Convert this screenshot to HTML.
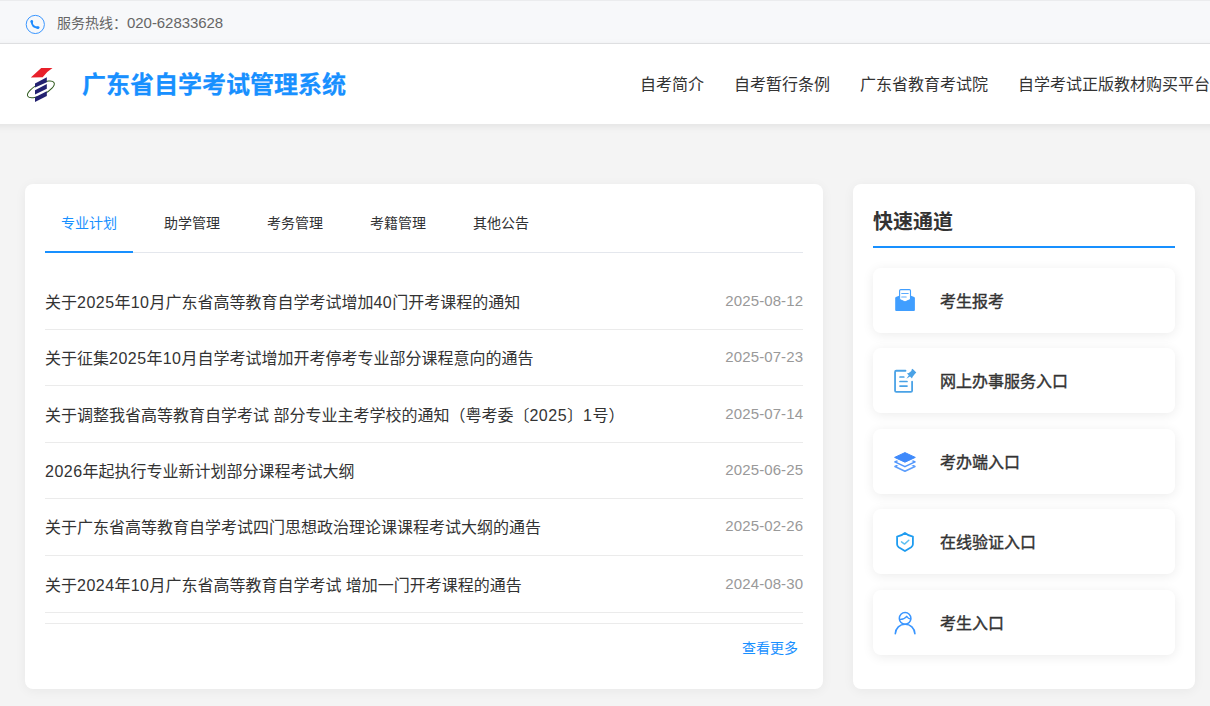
<!DOCTYPE html>
<html lang="zh-CN">
<head>
<meta charset="utf-8">
<title>广东省自学考试管理系统</title>
<style>
*{box-sizing:border-box;margin:0;padding:0}
html,body{width:1210px;height:706px;overflow:hidden}
body{background:#f4f4f4;font-family:"Liberation Sans","Noto Sans CJK SC",sans-serif;color:#333;position:relative}
.abs{position:absolute}
.topbar{position:absolute;left:0;top:0;width:1210px;height:44px;background:#f7f8fa;border-bottom:1px solid #e3e4e6;border-top:1px solid #ebecee}
.hot{position:absolute;left:57px;top:12px;font-size:14px;line-height:20px;color:#666;white-space:nowrap}
.hot span{font-size:15px;letter-spacing:-.05px}
.phone{position:absolute;left:25px;top:13px;width:21px;height:21px}
.hshadow{position:absolute;left:-30px;top:44px;width:1270px;height:80px;background:#fff;box-shadow:0 2px 8px rgba(0,0,0,.08)}
.header{position:absolute;left:0;top:44px;width:1210px;height:80px;background:#fff}
.logo{position:absolute;left:20px;top:18px;width:44px;height:44px}
.title{position:absolute;left:82px;top:23px;font-size:24px;line-height:36px;font-weight:bold;color:#1890ff;-webkit-text-stroke:.25px #1890ff;white-space:nowrap}
.nav{position:absolute;top:30px;font-size:16px;line-height:22px;color:#333;white-space:nowrap}
.card{position:absolute;background:#fff;border-radius:8px;box-shadow:0 2px 12px rgba(0,0,0,.05)}
.c1{left:25px;top:184px;width:798px;height:505px}
.c2{left:853px;top:184px;width:342px;height:505px}
.tab{position:absolute;top:28px;font-size:14px;line-height:22px;color:#303133;white-space:nowrap}
.tab.on{color:#1890ff}
.tline{position:absolute;left:20px;top:68px;width:758px;height:1px;background:#e4e7ed}
.tbar{position:absolute;left:20px;top:67px;width:88px;height:2px;background:#1890ff}
.row{position:absolute;left:20px;width:758px;height:56.5px;border-bottom:1px solid #ebebeb}
.row .t{position:absolute;left:0;top:18px;font-size:16px;line-height:24px;color:#333;white-space:nowrap}
.row .d{position:absolute;right:0;top:17px;font-size:15px;line-height:22px;color:#999;white-space:nowrap;letter-spacing:.1px;margin-right:-.1px}
.n{letter-spacing:.5px}
.more{position:absolute;right:25px;top:453px;font-size:14px;line-height:22px;color:#1890ff;white-space:nowrap}
.qt{position:absolute;left:20px;top:24px;font-size:20px;line-height:28px;font-weight:bold;color:#333;white-space:nowrap}
.qline{position:absolute;left:20px;top:61.5px;width:302px;height:2px;background:#1890ff}
.qi{position:absolute;left:20px;width:302px;height:65px;background:#fff;border-radius:8px;box-shadow:0 2px 12px rgba(0,0,0,.08)}
.qi .tx{position:absolute;left:67px;top:22px;font-size:16px;line-height:24px;color:#333;-webkit-text-stroke:.4px #333;white-space:nowrap}
.qi svg{position:absolute}
</style>
</head>
<body>
<div class="topbar">
  <svg class="phone" viewBox="0 0 21 21"><circle cx="10.3" cy="10.450" r="9.100" fill="none" stroke="#3a96ff" stroke-width="1"/><path d="M6.700 7.300Q6.800 13.500 13.100 13.700" fill="none" stroke="#1e8bff" stroke-width="1.900" stroke-linecap="round"/><ellipse cx="6.750" cy="7.600" rx="1.350" ry="1.700" fill="#1e8bff"/><ellipse cx="12.800" cy="13.600" rx="1.700" ry="1.350" fill="#1e8bff"/></svg>
  <div class="hot">服务热线：<span>020-62833628</span></div>
</div>
<div class="hshadow"></div>
<div class="header">
  <svg class="logo" viewBox="20 62 44 44">
    <ellipse cx="40.9" cy="89.4" rx="14.8" ry="5.6" transform="rotate(-27 40.9 89.4)" fill="none" stroke="#2f5a1e" stroke-width="1"/>
    <path d="M41.200 68.100L52.500 68Q47 71.300 42.700 77.300L30.800 77.400z" fill="#e8202a"/>
    <polygon points="35,83.5 46.8,77.3 46.800,82.200 35,87.500" fill="#232270"/>
    <polygon points="35,90.3 46.8,84.1 46.800,88.800 35,94.400" fill="#232270"/>
    <polygon points="35,97.2 46.8,91.3 46.800,96 35,101.900" fill="#232270"/>
  </svg>
  <div class="title">广东省自学考试管理系统</div>
  <div class="nav" style="left:640px">自考简介</div>
  <div class="nav" style="left:734px">自考暂行条例</div>
  <div class="nav" style="left:860px">广东省教育考试院</div>
  <div class="nav" style="left:1018px">自学考试正版教材购买平台</div>
</div>

<div class="card c1">
  <div class="tab on" style="left:36px">专业计划</div>
  <div class="tab" style="left:139px">助学管理</div>
  <div class="tab" style="left:242px">考务管理</div>
  <div class="tab" style="left:345px">考籍管理</div>
  <div class="tab" style="left:448px">其他公告</div>
  <div class="tline"></div><div class="tbar"></div>

  <div class="row" style="top:89px;height:57px"><div class="t">关于<span class="n">2025</span>年<span class="n">10</span>月广东省高等教育自学考试增加<span class="n">40</span>门开考课程的通知</div><div class="d">2025-08-12</div></div>
  <div class="row" style="top:146px;height:56px"><div class="t" style="top:17px">关于征集<span class="n">2025</span>年<span class="n">10</span>月自学考试增加开考停考专业部分课程意向的通告</div><div class="d" style="top:16px">2025-07-23</div></div>
  <div class="row" style="top:202px;height:57px"><div class="t">关于调整我省高等教育自学考试 部分专业主考学校的通知（粤考委〔<span class="n">2025</span>〕<span class="n">1</span>号）</div><div class="d">2025-07-14</div></div>
  <div class="row" style="top:259px;height:56px"><div class="t" style="top:17px"><span class="n">2026</span>年起执行专业新计划部分课程考试大纲</div><div class="d" style="top:16px">2025-06-25</div></div>
  <div class="row" style="top:315px;height:57px"><div class="t" style="top:17px">关于广东省高等教育自学考试四门思想政治理论课课程考试大纲的通告</div><div class="d" style="top:16px">2025-02-26</div></div>
  <div class="row" style="top:372px;height:57px"><div class="t">关于<span class="n">2024</span>年<span class="n">10</span>月广东省高等教育自学考试 增加一门开考课程的通告</div><div class="d">2024-08-30</div></div>
  <div class="row" style="top:429px;height:11px"></div>
  <div class="more">查看更多</div>
</div>

<div class="card c2">
  <div class="qt">快速通道</div>
  <div class="qline"></div>
  <div class="qi" style="top:84px"><svg viewBox="0 0 40 40" style="left:12px;top:12px;width:40px;height:40px"><path d="M14.600 19.500V10.700Q14.600 9.600 15.700 9.600H24.400Q25.500 9.600 25.500 10.700V19.500L20 22z" fill="#fff" stroke="#409eff" stroke-width="1.1"/><path d="M16.700 13.500H23.200M16.700 17H21.200" stroke="#5aabff" stroke-width="1.1" stroke-linecap="round" fill="none"/><path d="M10.200 18.100Q10.200 17.300 10.900 17L14.100 15.700V19.200L19.950 21.700L26 19.200V15.700L29.200 17Q29.900 17.300 29.900 18.100V29.900Q29.900 30.900 28.900 30.900H11.200Q10.200 30.900 10.200 29.900z" fill="#409eff"/></svg><div class="tx">考生报考</div></div>
  <div class="qi" style="top:164px"><svg viewBox="0 0 40 40" style="left:12px;top:12px;width:40px;height:40px"><path d="M20.500 10.750H11.250Q10.050 10.750 10.050 11.950V30.700Q10.050 31.900 11.250 31.900H25.900Q27.100 31.900 27.100 30.700V21.700" fill="none" stroke="#4aa2e6" stroke-width="1.800" stroke-linecap="round"/><path d="M15 17H18.800M15 21.500H22M15 26.100H22" stroke="#4aa2e6" stroke-width="1.700" stroke-linecap="round" fill="none"/><path d="M27.500 8.800L31.300 12.400L29.800 13.900L27.500 17L27 18.400L25 16.400L21.400 18.700L23.800 15.200L21.900 13.400L23.800 13.100L26.600 10.700L26.300 10z" fill="#4aa2e6"/></svg><div class="tx">网上办事服务入口</div></div>
  <div class="qi" style="top:245px"><svg viewBox="0 0 40 40" style="left:12px;top:13px;width:40px;height:40px"><path d="M9.900 24.500L19.950 19.800L30 24.500L19.950 29.200z" fill="#fff" stroke="#5b9dfc" stroke-width="1.500" stroke-linejoin="round"/><path d="M9.900 19.900L19.950 15.200L30 19.900L19.950 24.600z" fill="#fff" stroke="#fff" stroke-width="4" stroke-linejoin="round"/><path d="M9.900 19.900L19.950 15.200L30 19.900L19.950 24.600z" fill="#fff" stroke="#4f95fc" stroke-width="1.600" stroke-linejoin="round"/><path d="M9.600 15.400L19.950 10.600L30.300 15.400L19.950 20.200z" fill="#fff" stroke="#fff" stroke-width="3.400" stroke-linejoin="round"/><path d="M9.600 15.400L19.950 10.600L30.300 15.400L19.950 20.200z" fill="#3f8afb" stroke="#3f8afb" stroke-width="1" stroke-linejoin="round"/></svg><div class="tx">考办端入口</div></div>
  <div class="qi" style="top:325px"><svg viewBox="0 0 40 40" style="left:12px;top:13px;width:40px;height:40px"><path d="M19.950 11C17.700 12.900 15.200 14.100 12.100 14.600V22.200Q12.100 24 13.700 25.200L19.950 29L26.200 25.200Q27.900 24 27.900 22.200V14.600C24.700 14.100 22.200 12.900 19.950 11z" fill="none" stroke="#1e9cf0" stroke-width="1.800" stroke-linejoin="round"/><path d="M16.500 19.900L19.500 22.100L23.800 18.200" fill="none" stroke="#5cc0f2" stroke-width="1.500" stroke-linecap="round" stroke-linejoin="round"/></svg><div class="tx">在线验证入口</div></div>
  <div class="qi" style="top:406px"><svg viewBox="0 0 40 40" style="left:12px;top:13px;width:40px;height:40px"><circle cx="20.100" cy="15.350" r="5.800" fill="none" stroke="#3a96ff" stroke-width="1.500"/><path d="M14.500 16.400C17.500 16.600 19.800 15.600 21.700 13.300C22.700 14.800 24 15.700 25.700 16.100" fill="none" stroke="#3a96ff" stroke-width="1.300" stroke-linecap="round" stroke-linejoin="round"/><path d="M10.300 30.700C10.700 25.300 14.700 21.200 20.100 21.200S29.500 25.300 29.900 30.700" fill="none" stroke="#3a96ff" stroke-width="1.600" stroke-linecap="round"/></svg><div class="tx">考生入口</div></div>
</div>
</body>
</html>
